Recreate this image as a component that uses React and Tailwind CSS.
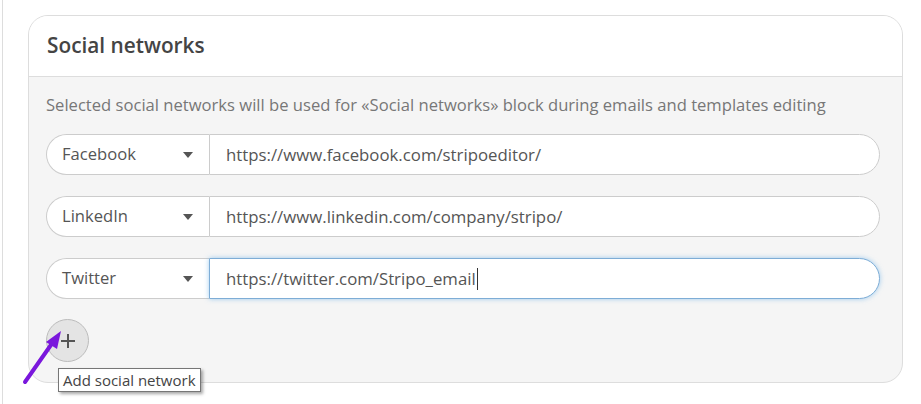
import React from "react";

const rows = [
  { name: "Facebook", url: "https://www.facebook.com/stripoeditor/" },
  { name: "LinkedIn", url: "https://www.linkedin.com/company/stripo/" },
  { name: "Twitter", url: "https://twitter.com/Stripo_email", focused: true },
];

function SocialRow({ name, url, focused }) {
  return (
    <div className="flex h-[41px] w-[834px]">
      <div className="flex w-[163px] items-center justify-between rounded-l-full border border-r-0 border-[#cccccc] bg-white pl-[15px] pr-[16px] text-[16.6px] text-[#555]">
        <span>{name}</span>
        <svg width="10" height="6" viewBox="0 0 10 6">
          <path d="M0 0 L10 0 L5 6 Z" fill="#555" />
        </svg>
      </div>
      <div
        className={
          focused
            ? "flex flex-1 items-center rounded-r-full border border-[#7eadd6] bg-white pl-[16px] text-[16.8px] text-[#555] shadow-[0_0_5px_rgba(102,175,233,0.6)]"
            : "flex flex-1 items-center rounded-r-full border border-[#cccccc] bg-white pl-[16px] text-[16.8px] text-[#555]"
        }
      >
        <span>{url}</span>
        {focused && <span className="ml-px h-[22px] w-px bg-[#333]" />}
      </div>
    </div>
  );
}

export default function App() {
  return (
    <div
      className="relative h-[404px] w-[921px] overflow-hidden bg-white"
      style={{ fontFamily: '"Open Sans", "Noto Sans", sans-serif' }}
    >
      <div className="absolute left-[2px] top-0 h-full w-px bg-[#dddddd]" />
      <div className="ml-[28px] mt-[15px] w-[875px] overflow-hidden rounded-[20px] border border-[#dddddd] bg-[#f5f5f5]">
        <div className="flex h-[61px] items-center border-b border-[#dddddd] bg-white pl-[18px] text-[20.8px] font-semibold text-[#444]">
          Social networks
        </div>
        <div className="pl-[17px] pt-[18px] pb-[20px]">
          <p className="text-[16.6px] text-[#777] leading-[20px]">
            Selected social networks will be used for «Social networks» block during emails and templates editing
          </p>
          <div className="mt-[19px] flex flex-col gap-[21px]">
            {rows.map((r) => (
              <SocialRow key={r.name} {...r} />
            ))}
          </div>
          <button className="mt-[20px] flex h-[43px] w-[43px] items-center justify-center rounded-full border border-[#bbbbbb] bg-[#e4e4e4]">
            <svg width="16" height="16" viewBox="0 0 16 16">
              <path d="M8 1 V15 M1 8 H15" stroke="#555" strokeWidth="2" />
            </svg>
          </button>
        </div>
      </div>
      <div className="absolute left-[58px] top-[368px] border border-[#767676] bg-white px-[4px] py-[1px] text-[15px] leading-[20px] text-[#444] shadow-[2px_2px_3px_rgba(0,0,0,0.35)]">
        Add social network
      </div>
      <svg className="absolute left-0 top-0" width="921" height="404">
        <line x1="25" y1="382" x2="53" y2="342" stroke="#7a17dc" strokeWidth="4" strokeLinecap="round" />
        <path d="M61 331 L46 342 L57 349 Z" fill="#7a17dc" />
      </svg>
    </div>
  );
}
